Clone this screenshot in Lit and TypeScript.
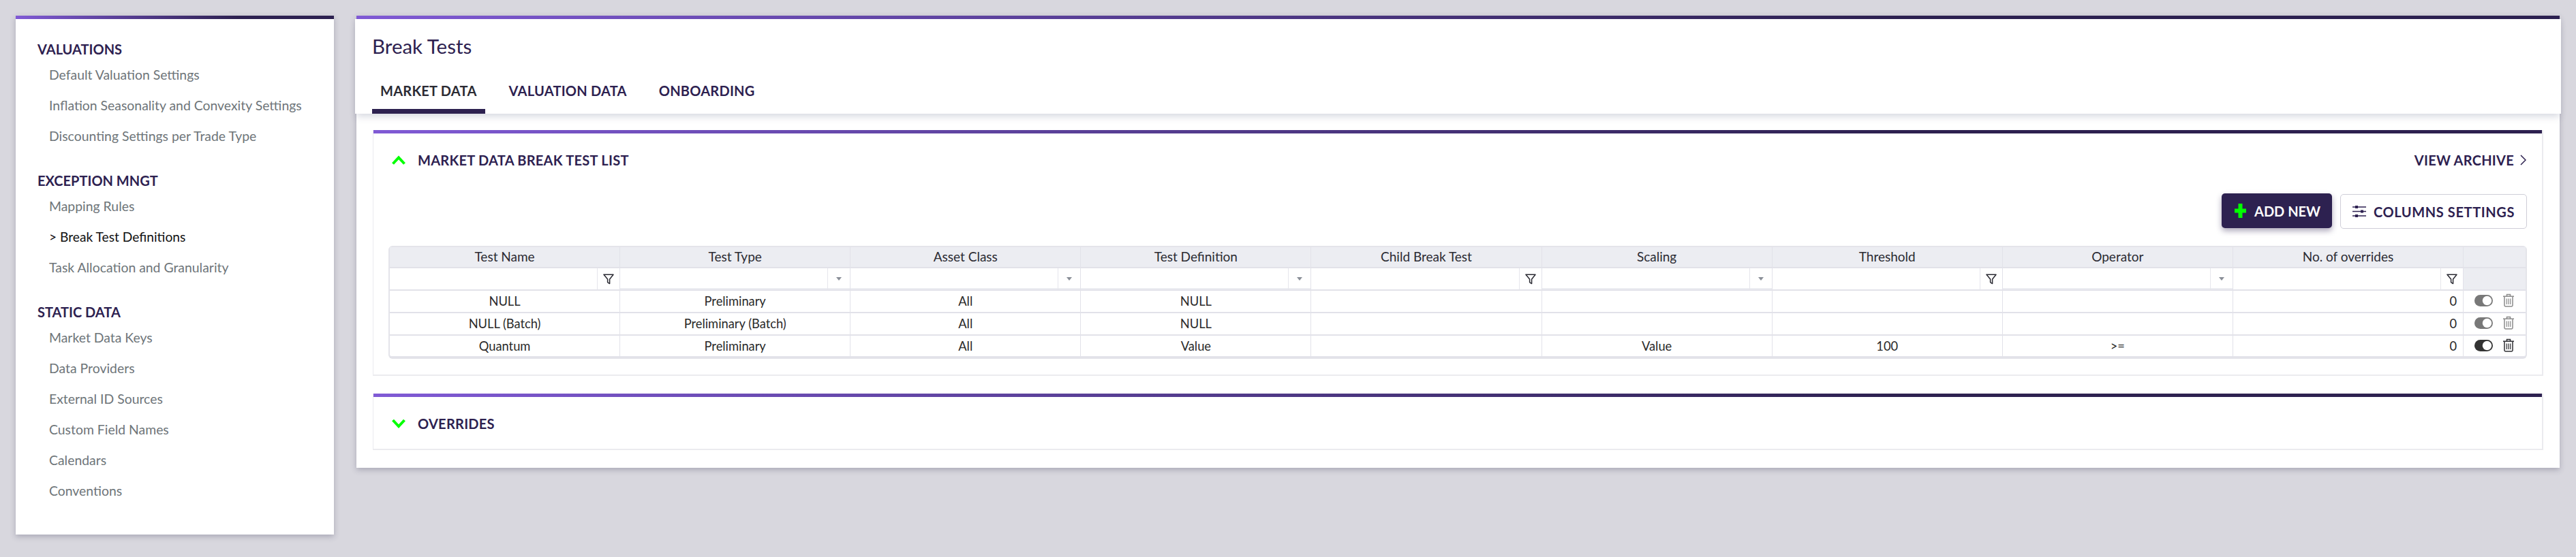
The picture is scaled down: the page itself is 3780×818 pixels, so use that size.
import { LitElement, html, css, svg } from "lit";
import { customElement } from "lit/decorators.js";

const groups = [
  { title: "VALUATIONS", items: ["Default Valuation Settings", "Inflation Seasonality and Convexity Settings", "Discounting Settings per Trade Type"] },
  { title: "EXCEPTION MNGT", items: ["Mapping Rules", "> Break Test Definitions", "Task Allocation and Granularity"] },
  { title: "STATIC DATA", items: ["Market Data Keys", "Data Providers", "External ID Sources", "Custom Field Names", "Calendars", "Conventions"] },
];
const cols = ["Test Name", "Test Type", "Asset Class", "Test Definition", "Child Break Test", "Scaling", "Threshold", "Operator", "No. of overrides"];
const filters = ["text", "select", "select", "select", "text", "select", "text", "select", "text"];
const rows = [
  { v: ["NULL", "Preliminary", "All", "NULL", "", "", "", "", "0"], on: false },
  { v: ["NULL (Batch)", "Preliminary (Batch)", "All", "NULL", "", "", "", "", "0"], on: false },
  { v: ["Quantum", "Preliminary", "All", "Value", "", "Value", "100", ">=", "0"], on: true },
];

const chevUp = html`<svg class="chev" viewBox="0 0 20 14"><path d="M1.5 12.5 L10 3.5 L18.5 12.5" fill="none" stroke="#00ff00" stroke-width="4"/></svg>`;
const chevDown = html`<svg class="chev" viewBox="0 0 20 14"><path d="M1.5 2 L10 11 L18.5 2" fill="none" stroke="#00ff00" stroke-width="4"/></svg>`;
const funnel = html`<svg class="funnel" viewBox="0 0 16 16"><path d="M1 1.2 H15 L9.6 8 V14.6 L6.6 12.6 V8 Z" fill="none" stroke="#2b2b33" stroke-width="1.5" stroke-linejoin="round"/></svg>`;
const trash = (on: boolean) => html`<svg class="trash" viewBox="0 0 18 20"><g fill="none" stroke=${on ? "#2f2f33" : "#8a8a8a"} stroke-width="1.5"><path d="M1 4.2 H17"/><path d="M6.5 4 V1.4 H11.5 V4"/><path d="M3 4.5 V17.6 Q3 19 4.4 19 H13.6 Q15 19 15 17.6 V4.5"/><path d="M6.3 7.5 V16 M9 7.5 V16 M11.7 7.5 V16" stroke-width="1.2"/></g></svg>`;
const toggle = (on: boolean) => html`<svg class="toggle" viewBox="0 0 27 17"><rect width="27" height="17" rx="8.5" fill=${on ? "#333333" : "#787878"}/><circle cx="18.5" cy="8.5" r="6.7" fill="#fff"/></svg>`;
const sliders = svg`<path d="M0 3 H20 M0 9.5 H20 M0 16 H20" stroke="#2d2150" stroke-width="1.4"/><rect x="4" y="1" width="4" height="4" fill="#2d2150"/><rect x="12" y="7.5" width="4" height="4" fill="#2d2150"/><rect x="4" y="14" width="4" height="4" fill="#2d2150"/>`;

@customElement("app-root")
export class AppRoot extends LitElement {
  static styles = css`
    :host { display: block; width: 3780px; min-height: 818px; background: #d8d7de; font-family: "Lato", "Liberation Sans", sans-serif; box-sizing: border-box; }
    * { box-sizing: border-box; }
    .page { display: flex; align-items: flex-start; gap: 33px; padding: 23px 24px 0 23px; }
    .bar { height: 5px; flex: none; background: linear-gradient(90deg, #805ad5, #2d2150 70%); }
    .side { width: 467px; height: 762px; background: #fff; box-shadow: 0 3px 8px rgba(60,60,90,.3); flex: none; }
    .side-body { padding: 30px 0 0 32px; }
    .group + .group { margin-top: 29px; }
    .group-title { height: 29px; line-height: 29px; font-size: 20px; font-weight: 700; color: #2d2150; }
    .item { height: 45px; line-height: 46px; padding-left: 17px; font-size: 19.4px; font-weight: 400; color: #6e7579; }
    .item.active { color: #111; font-size: 19.2px; }
    .main { flex: 1; height: 664px; background: #fff; box-shadow: 0 3px 8px rgba(60,60,90,.3); display: flex; flex-direction: column; }
    .head { flex: none; margin: 0 -2px; height: 139px; background: #fff; box-shadow: 0 6px 10px -2px rgba(90,100,130,.25); padding: 0 0 0 25px; display: flex; flex-direction: column; position: relative; }
    .title { height: 80px; line-height: 80px; font-size: 29.5px; font-weight: 400; color: #2d2150; }
    .tabs { display: flex; gap: 23px; flex: 1; }
    .tab { padding: 0 12px; font-size: 20px; font-weight: 700; letter-spacing: .25px; color: #2d2150; line-height: 50px; border-bottom: 7px solid transparent; }
    .tab.active { border-bottom-color: #2d2150; color: #2b2b33; }
    .content { padding: 24px 24px 26px; display: flex; flex-direction: column; gap: 26px; }
    .section { border: solid #ebebef; border-width: 0 2px 2px 1px; }
    .sec-head { height: 78px; display: flex; align-items: center; padding-left: 27px; font-size: 20px; font-weight: 700; letter-spacing: .27px; color: #2d2150; }
    .closed { height: 83px; }
    .closed .sec-head { height: 76px; padding-top: 2px; }
    .chev { width: 20px; height: 14px; margin-right: 18px; }
    .archive { margin-left: auto; margin-right: 23px; display: flex; align-items: center; gap: 9px; }
    .archive svg { width: 9px; height: 16px; }
    .sec-body { padding: 0 22px 23px 22px; }
    .toolbar { display: flex; justify-content: flex-end; align-items: flex-start; gap: 12px; margin: 10px 0 25px; }
    .btn { height: 51px; display: flex; align-items: center; font-size: 20px; font-weight: 700; border-radius: 5px; }
    .btn.primary { width: 162px; background: #2d2150; color: #fff; padding-left: 18px; gap: 11px; box-shadow: 0 4px 8px rgba(45,33,80,.4); }
    .btn.primary svg { width: 19px; height: 23px; }
    .btn.secondary { width: 274px; margin-top: 1px; background: #fff; color: #2d2150; border: 1px solid #cfced8; padding-left: 17px; gap: 11px; letter-spacing: .6px; }
    .btn.secondary svg { width: 20px; height: 19px; }
    .table { display: grid; grid-template-columns: repeat(9, 1fr) 91px; grid-template-rows: 31px 33px 33px 33px 33px; border: 2px solid #e4e4ea; border-radius: 6px; border-bottom-width: 4px; height: 166px; font-size: 18.3px; font-weight: 400; color: #2a2a2a; }
    .cell { display: flex; align-items: center; justify-content: center; padding-bottom: 2px; border-right: 1px solid #e2e2e9; border-bottom: 2px solid #e2e2e9; min-width: 0; }
    .hd { background: #ecedf2; font-size: 19px; color: #2b2b33; }
    .filter { padding: 0; justify-content: flex-end; }
    .filter .ctl { width: 33px; height: 100%; border-left: 1px solid #e6e6ec; display: flex; align-items: center; justify-content: center; }
    .filter.select { box-shadow: inset 0 -2px 0 #ecedf2; }
    .caret { width: 0; height: 0; border: solid transparent; border-width: 5px 4px 0; border-top-color: #8a8f98; }
    .funnel { width: 16px; height: 16px; }
    .right { justify-content: flex-end; padding-right: 9px; }
    .actions { gap: 14px; border-right: none; padding-bottom: 3px; }
    .last { border-right: none; }
    .toggle { width: 27px; height: 17px; }
    .trash { width: 18px; height: 20px; }
  `;

  private section(title: string, open: boolean) {
    return html`<div class="section ${open ? "" : "closed"}">
      <div class="bar"></div>
      <div class="sec-head">${open ? chevUp : chevDown}<span>${title}</span>
        ${open ? html`<span class="archive">VIEW ARCHIVE <svg viewBox="0 0 9 16"><path d="M1 1 L8 8 L1 15" fill="none" stroke="#2d2150" stroke-width="1.5"/></svg></span>` : ""}
      </div>
      ${open ? html`<div class="sec-body">
        <div class="toolbar">
          <div class="btn primary"><svg viewBox="0 0 19 23"><path d="M9.5 1 V22 M1 11.5 H18" stroke="#00ff00" stroke-width="6"/></svg>ADD NEW</div>
          <div class="btn secondary"><svg viewBox="0 0 20 19">${sliders}</svg>COLUMNS SETTINGS</div>
        </div>
        <div class="table">
          ${cols.map((c) => html`<div class="cell hd">${c}</div>`)}<div class="cell hd last"></div>
          ${filters.map((f) => html`<div class="cell filter ${f}"><div class="ctl">${f === "text" ? funnel : html`<span class="caret"></span>`}</div></div>`)}<div class="cell hd last"></div>
          ${rows.map((r) => html`${r.v.map((v, i) => html`<div class="cell ${i === 8 ? "right" : ""}">${v}</div>`)}<div class="cell actions">${toggle(r.on)}${trash(r.on)}</div>`)}
        </div>
      </div>` : ""}
    </div>`;
  }

  render() {
    return html`<div class="page">
      <aside class="side">
        <div class="bar"></div>
        <div class="side-body">
          ${groups.map((g) => html`<div class="group"><div class="group-title">${g.title}</div>
            ${g.items.map((i) => html`<div class="item ${i.startsWith(">") ? "active" : ""}">${i}</div>`)}</div>`)}
        </div>
      </aside>
      <main class="main">
        <div class="bar"></div>
        <div class="head">
          <div class="title">Break Tests</div>
          <div class="tabs"><div class="tab active">MARKET DATA</div><div class="tab">VALUATION DATA</div><div class="tab">ONBOARDING</div></div>
        </div>
        <div class="content">
          ${this.section("MARKET DATA BREAK TEST LIST", true)}
          ${this.section("OVERRIDES", false)}
        </div>
      </main>
    </div>`;
  }
}
